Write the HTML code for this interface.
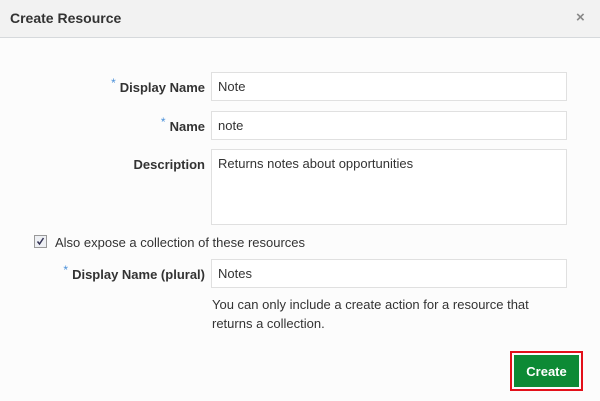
<!DOCTYPE html>
<html><head><style>
body{margin:0;width:600px;height:401px;background:#fcfcfc;font-family:"Liberation Sans",Arial,sans-serif;font-size:13px;color:#333;position:relative;overflow:hidden}
.hdr{position:absolute;left:0;top:0;width:600px;height:37px;background:#f2f2f2;border-bottom:1px solid #d6d9dc}
.hdr .t{position:absolute;left:10px;top:10px;font-weight:bold;font-size:14px;color:#333}
.hdr .x{position:absolute;left:576px;top:9px;font-size:15px;color:#888;font-weight:bold}
.lbl{position:absolute;font-weight:bold;color:#333;text-align:right}
.star{color:#4a90d9;font-size:12px;position:relative;top:-5px;margin-right:4px;font-weight:normal}
.inp{position:absolute;left:211px;width:356px;background:#fff;border:1px solid #e0e0e0;box-sizing:border-box;padding:6px 6px;color:#333}
.cb{position:absolute;left:34px;top:235px;width:11px;height:11px;border:1px solid #999;background:#eef0f4}
.txt{position:absolute}
.btn{position:absolute;left:510px;top:351px;width:73px;height:40px;border:2px solid #e3101a;box-sizing:border-box;padding:2px}
.btn div{width:100%;height:100%;background:#0d8a35;color:#fff;font-weight:bold;font-size:13px;text-align:center;line-height:33px}
</style></head><body>
<div class="hdr"><div class="t">Create Resource</div><div class="x">×</div></div>
<div class="lbl" style="right:395px;top:80px"><span class="star">*</span>Display Name</div>
<div class="inp" style="top:72px;height:29px">Note</div>
<div class="lbl" style="right:395px;top:119px"><span class="star">*</span>Name</div>
<div class="inp" style="top:111px;height:29px">note</div>
<div class="lbl" style="right:395px;top:157px">Description</div>
<div class="inp" style="top:149px;height:76px">Returns notes about opportunities</div>
<div class="cb"><svg width="11" height="11" viewBox="0 0 11 11" style="position:absolute;left:0;top:0"><path d="M2.5 5.5 L4.5 8 L8.5 2" stroke="#335" stroke-width="1.5" fill="none"/></svg></div>
<div class="txt" style="left:55px;top:235px">Also expose a collection of these resources</div>
<div class="lbl" style="right:395px;top:267px"><span class="star">*</span>Display Name (plural)</div>
<div class="inp" style="top:259px;height:29px">Notes</div>
<div class="txt" style="left:212px;top:295px;line-height:19px">You can only include a create action for a resource that<br>returns a collection.</div>
<div class="btn"><div>Create</div></div>
</body></html>
